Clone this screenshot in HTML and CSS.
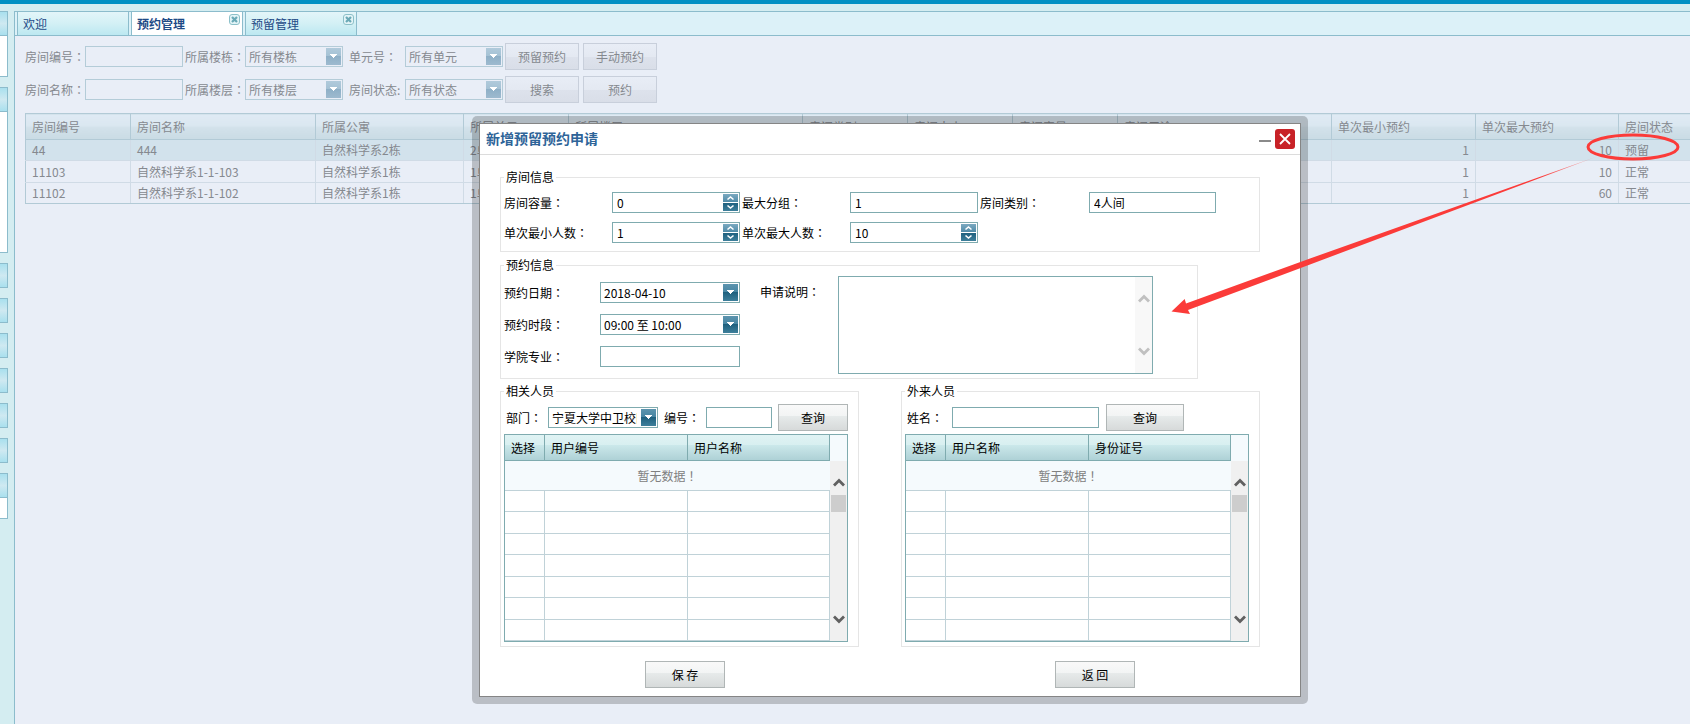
FILE: index.html
```
<!DOCTYPE html>
<html lang="zh-CN">
<head>
<meta charset="utf-8">
<title>预约管理</title>
<link rel="stylesheet" href="styles.css">
</head>
<body>
<svg class="symbols" aria-hidden="true">
  <symbol id="down" viewBox="0 0 15 17"><path d="M4 6h7v1h-1v1H9v1H8v1H7V9H6V8H5V7H4z" fill="#fff"/></symbol>
  <symbol id="spin" viewBox="0 0 15 17"><path d="M4.500 5.500L7.500 3L10.500 5.500M4.500 11.500L7.500 14L10.500 11.500" fill="none" stroke="#fff" stroke-width="1.600"/></symbol>
  <symbol id="tabx" viewBox="0 0 11 11"><rect x=".5" y=".5" width="10" height="10" rx="2.500" fill="#e3f4f7" stroke="#8cc0c9"/><path d="M3 3L8 8M8 3L3 8" stroke="#6aa9b6" stroke-width="2.200"/></symbol>
  <symbol id="up-arrow" viewBox="0 0 12 9"><path d="M1 7.500L6 2.500L11 7.500" fill="none" stroke="currentColor" stroke-width="2.800"/></symbol>
  <symbol id="down-arrow" viewBox="0 0 12 9"><path d="M1 1.500L6 6.500L11 1.500" fill="none" stroke="currentColor" stroke-width="2.800"/></symbol>
</svg>

<div class="topbar"></div>
<div class="app">
  <aside class="side">
    <div class="panel"><div class="panel-head"></div><div class="panel-body small"></div></div>
    <div class="panel"><div class="panel-head"></div><div class="panel-body large"></div></div>
    <div class="panel"><div class="panel-head"></div></div>
    <div class="panel"><div class="panel-head"></div></div>
    <div class="panel"><div class="panel-head"></div></div>
    <div class="panel"><div class="panel-head"></div></div>
    <div class="panel"><div class="panel-head"></div></div>
    <div class="panel"><div class="panel-head"></div></div>
    <div class="panel"><div class="panel-head"></div><div class="panel-body tiny"></div></div>
  </aside>

  <main class="main">
    <nav class="tabs">
      <a class="tab" href="#">欢迎</a>
      <a class="tab active" href="#">预约管理<svg class="tab-x"><use href="#tabx"/></svg></a>
      <a class="tab" href="#">预留管理<svg class="tab-x"><use href="#tabx"/></svg></a>
    </nav>

    <form class="filters">
      <label for="f-no">房间编号<span class="colon" lang="zh-TW">：</span></label>
      <input class="field" id="f-no" type="text">
      <label for="f-building">所属楼栋<span class="colon" lang="zh-TW">：</span></label>
      <div class="combo"><select class="field" id="f-building"><option>所有楼栋</option></select><svg><use href="#down"/></svg></div>
      <label for="f-unit">单元号<span class="colon" lang="zh-TW">：</span></label>
      <div class="combo"><select class="field" id="f-unit"><option>所有单元</option></select><svg><use href="#down"/></svg></div>
      <button class="btn" type="button">预留预约</button>
      <button class="btn" type="button">手动预约</button>

      <label for="f-name">房间名称<span class="colon" lang="zh-TW">：</span></label>
      <input class="field" id="f-name" type="text">
      <label for="f-floor">所属楼层<span class="colon" lang="zh-TW">：</span></label>
      <div class="combo"><select class="field" id="f-floor"><option>所有楼层</option></select><svg><use href="#down"/></svg></div>
      <label for="f-state">房间状态:</label>
      <div class="combo"><select class="field" id="f-state"><option>所有状态</option></select><svg><use href="#down"/></svg></div>
      <button class="btn" type="button">搜索</button>
      <button class="btn" type="button">预约</button>
    </form>

    <div class="rooms-wrap">
      <table class="rooms">
        <colgroup><col class="w105"><col class="w185"><col class="w148"><col class="w105"><col class="w234"><col class="w105"><col class="w105"><col class="w105"><col class="w214"><col class="w144"><col class="w143"><col class="w105"></colgroup>
        <thead><tr><th>房间编号</th><th>房间名称</th><th>所属公寓</th><th>所属单元</th><th>所属楼层</th><th>房间类别</th><th>房间大小</th><th>房间容量</th><th>房间用途</th><th>单次最小预约</th><th>单次最大预约</th><th>房间状态</th></tr></thead>
        <tbody>
          <tr class="selected"><td>44</td><td>444</td><td>自然科学系2栋</td><td>2单元</td><td></td><td></td><td></td><td></td><td></td><td class="num">1</td><td class="num">10</td><td>预留</td></tr>
          <tr><td>11103</td><td>自然科学系1-1-103</td><td>自然科学系1栋</td><td>1单元</td><td></td><td></td><td></td><td></td><td></td><td class="num">1</td><td class="num">10</td><td>正常</td></tr>
          <tr><td>11102</td><td>自然科学系1-1-102</td><td>自然科学系1栋</td><td>1单元</td><td></td><td></td><td></td><td></td><td></td><td class="num">1</td><td class="num">60</td><td>正常</td></tr>
        </tbody>
      </table>
    </div>
  </main>
</div>

<div class="dialog-shadow">
  <section class="dialog" role="dialog" aria-labelledby="dlg-title">
    <header class="dialog-head">
      <h1 id="dlg-title">新增预留预约申请</h1>
      <button class="minimize" type="button" aria-label="最小化"></button>
      <button class="close" type="button" aria-label="关闭"><svg viewBox="0 0 20 20"><path d="M5 5L15 15M15 5L5 15" stroke="#fff" stroke-width="1.800"/></svg></button>
    </header>
    <form class="dialog-body">
      <fieldset class="room-info">
        <legend>房间信息</legend>
        <div class="room-grid">
          <label for="cap">房间容量<span class="colon" lang="zh-TW">：</span></label>
          <div class="spinner"><input class="field" id="cap" type="text" value="0"><svg><use href="#spin"/></svg></div>
          <label for="grp">最大分组<span class="colon" lang="zh-TW">：</span></label>
          <input class="field" id="grp" type="text" value="1">
          <label for="kind">房间类别<span class="colon" lang="zh-TW">：</span></label>
          <input class="field" id="kind" type="text" value="4人间">
          <label for="min">单次最小人数<span class="colon" lang="zh-TW">：</span></label>
          <div class="spinner"><input class="field" id="min" type="text" value="1"><svg><use href="#spin"/></svg></div>
          <label for="max">单次最大人数<span class="colon" lang="zh-TW">：</span></label>
          <div class="spinner"><input class="field" id="max" type="text" value="10"><svg><use href="#spin"/></svg></div>
        </div>
      </fieldset>

      <fieldset class="book-info">
        <legend>预约信息</legend>
        <div class="book-layout">
          <div class="book-grid">
            <label for="date">预约日期<span class="colon" lang="zh-TW">：</span></label>
            <div class="combo"><select class="field" id="date"><option>2018-04-10</option></select><svg><use href="#down"/></svg></div>
            <label for="slot">预约时段<span class="colon" lang="zh-TW">：</span></label>
            <div class="combo"><select class="field" id="slot"><option>09:00 至 10:00</option></select><svg><use href="#down"/></svg></div>
            <label for="major">学院专业<span class="colon" lang="zh-TW">：</span></label>
            <input class="field" id="major" type="text">
          </div>
          <label class="note-label" for="note">申请说明<span class="colon" lang="zh-TW">：</span></label>
          <div class="note">
            <textarea id="note"></textarea>
            <div class="note-scroll"><svg><use href="#up-arrow"/></svg><svg><use href="#down-arrow"/></svg></div>
          </div>
        </div>
      </fieldset>

      <div class="people">
        <fieldset>
          <legend>相关人员</legend>
          <div class="query">
            <label class="dept-label" for="dept">部门<span class="colon" lang="zh-TW">：</span></label>
            <div class="combo dept"><select class="field" id="dept"><option>宁夏大学中卫校区</option></select><svg><use href="#down"/></svg></div>
            <label class="no-label" for="no">编号<span class="colon" lang="zh-TW">：</span></label>
            <input class="field no" id="no" type="text">
            <button class="btn" type="button">查询</button>
          </div>
          <div class="list">
            <table>
              <colgroup><col class="w40"><col class="w143"><col></colgroup>
              <thead><tr><th>选择</th><th>用户编号</th><th>用户名称</th></tr></thead>
              <tbody>
                <tr class="empty"><td colspan="3">暂无数据<span class="colon" lang="zh-TW">！</span></td></tr>
                <tr><td></td><td></td><td></td></tr><tr><td></td><td></td><td></td></tr>
                <tr><td></td><td></td><td></td></tr><tr><td></td><td></td><td></td></tr>
                <tr><td></td><td></td><td></td></tr><tr><td></td><td></td><td></td></tr>
                <tr><td></td><td></td><td></td></tr>
              </tbody>
            </table>
            <div class="scroll"><svg><use href="#up-arrow"/></svg><div class="thumb"></div><svg class="to-end"><use href="#down-arrow"/></svg></div>
          </div>
        </fieldset>

        <fieldset>
          <legend>外来人员</legend>
          <div class="query">
            <label class="name-label" for="name">姓名<span class="colon" lang="zh-TW">：</span></label>
            <input class="field name" id="name" type="text">
            <button class="btn wide" type="button">查询</button>
          </div>
          <div class="list">
            <table>
              <colgroup><col class="w40"><col class="w143"><col></colgroup>
              <thead><tr><th>选择</th><th>用户名称</th><th>身份证号</th></tr></thead>
              <tbody>
                <tr class="empty"><td colspan="3">暂无数据<span class="colon" lang="zh-TW">！</span></td></tr>
                <tr><td></td><td></td><td></td></tr><tr><td></td><td></td><td></td></tr>
                <tr><td></td><td></td><td></td></tr><tr><td></td><td></td><td></td></tr>
                <tr><td></td><td></td><td></td></tr><tr><td></td><td></td><td></td></tr>
                <tr><td></td><td></td><td></td></tr>
              </tbody>
            </table>
            <div class="scroll"><svg><use href="#up-arrow"/></svg><div class="thumb"></div><svg class="to-end"><use href="#down-arrow"/></svg></div>
          </div>
        </fieldset>
      </div>

      <footer class="actions">
        <button class="btn" type="button">保 存</button>
        <button class="btn" type="button">返 回</button>
      </footer>
    </form>
  </section>
</div>

<svg class="markup" width="1690" height="724" viewBox="0 0 1690 724" aria-hidden="true">
  <defs><linearGradient id="tail" gradientUnits="userSpaceOnUse" x1="1540" y1="177" x2="1602" y2="155"><stop offset="0" stop-color="#fb3b39"/><stop offset="1" stop-color="#fb3b39" stop-opacity="0.200"/></linearGradient></defs>
  <ellipse cx="1633" cy="147" rx="45" ry="12" fill="none" stroke="#fb3b39" stroke-width="3"/>
  <path d="M1171.500 311.500L1184.700 299L1186 303.500L1310 258.500L1597 156.500L1310 264.500L1188 310L1190 314z" fill="url(#tail)"/>
</svg>
</body>
</html>
```
FILE: styles.css
```
* { box-sizing: border-box; }

body {
  margin: 0;
  height: 100vh;
  display: flex;
  flex-direction: column;
  overflow: hidden;
  background: #d4edf1;
  color: #000;
  font: 12px/16px "Noto Sans CJK SC", sans-serif;
}

input, select, textarea, button { margin: 0; font: inherit; color: inherit; }
label { white-space: nowrap; }
.colon { font-family: "Noto Sans CJK TC", sans-serif; }
.symbols { display: none; }

.topbar { height: 4px; background: #0090c3; flex: none; }
.app { flex: 1; display: flex; padding-top: 7px; min-height: 0; }

/* side panels */
.side { width: 14px; flex: none; display: flex; flex-direction: column; gap: 10px; }
.panel { width: 8px; border-right: 1px solid #8cbccc; }
.panel-head {
  height: 25px;
  border: solid #8cbccc;
  border-width: 1px 0;
  background: linear-gradient(#a9e0ee, #cfe9f1 50%, #a9e0ee);
}
.panel-body { background: #fff; border-bottom: 1px solid #8cbccc; }
.panel-body.small { height: 41px; }
.panel-body.large { height: 141px; }
.panel-body.tiny { height: 21px; }

/* workspace */
.main {
  flex: 1;
  min-width: 0;
  border: solid #8cbccc;
  border-width: 1px 0 0 1px;
  background: #e9eef7;
  color: #85898f;
}
.tabs {
  display: flex;
  gap: 2px;
  height: 24px;
  padding-left: 2px;
  background: #dcf1f8;
  border-bottom: 1px solid #8cbccc;
}
.tab {
  position: relative;
  width: 112px;
  padding: 4px 5px;
  border: solid #8cbccc;
  border-width: 0 1px;
  background: linear-gradient(#e3f5f9, #d3f0f5 50%, #bce8f1);
  color: #1e4a86;
  text-decoration: none;
}
.tab.active { background: #fff; font-weight: bold; }
.tab-x { position: absolute; top: 2px; right: 2px; width: 11px; height: 11px; }

.field {
  display: block;
  width: 100%;
  height: 21px;
  padding: 0 4px;
  border: 1px solid #7fabaf;
  border-radius: 0;
  background: #fff;
  outline: 0;
}
select.field { appearance: none; padding: 0 20px 0 3px; text-overflow: clip; }
.combo, .spinner { position: relative; }
.combo svg, .spinner svg {
  position: absolute;
  top: 2px;
  right: 2px;
  width: 15px;
  height: 17px;
  background: linear-gradient(#5c94ae, #4685a2 49%, #1f617f 50%, #3e7f9b);
  pointer-events: none;
}
.spinner svg { background: linear-gradient(#7ba9c0, #4f8ba8 8px, #fff 8px, #fff 9px, #1f617f 9px, #3e7f9b); }

.btn {
  height: 27px;
  padding: 0;
  border: 1px solid #b0b6b6;
  border-radius: 0;
  background: linear-gradient(#f9f9f9, #f2f4f4 45%, #e6eaea 46%, #d7dada);
}

.filters {
  display: grid;
  grid-template-columns: 60px 100px 60px 104px 56px 100px 78px 74px;
  row-gap: 6px;
  align-items: center;
  padding: 7px 10px 10px;
}
.filters .field { width: 98px; border-color: #b4ccd8; background: #e9eef7; }
.filters .combo { width: 98px; }
.filters .combo svg { background: linear-gradient(#b0cadb, #a4c1d4 49%, #8fb0c7 50%, #9dbacf); }
.filters .btn { width: 74px; border-color: #c8cfdb; background: linear-gradient(#e8edf6, #e4e9f2 50%, #dde2ec 51%, #d9dee8); }

.rooms-wrap { padding-left: 10px; overflow: hidden; }
.rooms { width: 1698px; table-layout: fixed; border-collapse: collapse; border: 1px solid #b2cad6; }
.w40 { width: 40px; } .w105 { width: 105px; } .w143 { width: 143px; }
.w144 { width: 144px; } .w148 { width: 148px; } .w185 { width: 185px; }
.w214 { width: 214px; } .w234 { width: 234px; }
.rooms th, .rooms td { padding: 0 6px; border-right: 1px solid #d0dbe6; text-align: left; font-weight: normal; }
.rooms th {
  height: 26px;
  border: 1px solid #b2cad6;
  background: linear-gradient(#dfeaf4, #dae7f0 49%, #d3e2eb 50%, #c9dbe4);
}
.rooms td { height: 21px; border-bottom: 1px solid #d0dbe6; }
.rooms tr:nth-child(2) td { height: 22px; }
.rooms tr:last-child td { border-bottom-color: #b2cad6; }
.rooms .selected { background: #d2e2ec; }
.rooms .num { text-align: right; }

/* dialog window */
.dialog-shadow {
  position: absolute;
  top: 116px;
  left: 472px;
  width: 836px;
  padding: 7px;
  border-radius: 5px;
  background: rgba(0, 0, 0, 0.2);
}
.dialog { border: 1px solid #858585; background: #fff; }
.dialog-head {
  display: flex;
  align-items: center;
  height: 31px;
  padding: 0 5px 0 6px;
  border-bottom: 1px solid #dcdcdc;
}
.dialog-head h1 { flex: 1; margin: 0; padding-bottom: 2px; font-size: 14px; line-height: 20px; color: #2e6498; }
.minimize { width: 12px; height: 20px; margin-right: 4px; padding: 4px 0 0; border: 0; background: none; }
.minimize::before { content: ""; display: block; height: 2px; background: #8a8a8a; }
.close { width: 20px; height: 20px; padding: 0; border: 0; border-radius: 3px; background: #c82227; }
.close svg { display: block; width: 20px; height: 20px; }

.dialog-body { padding: 14px 0 8px 20px; }
fieldset { min-width: 0; margin: 0; padding: 0 3px 4px; border: 1px solid #e5e5e5; }
legend { padding: 0 2px; height: 17px; }

.room-info { margin-right: 40px; }
.room-grid {
  display: grid;
  grid-template-columns: 108px 130px 108px 130px 109px 127px;
  row-gap: 9px;
  align-items: center;
  padding: 6px 0 4px;
}
.room-grid .spinner, .room-grid .field { max-width: 128px; }

.book-info { margin: 5px 102px 4px 0; }
.book-layout { display: flex; align-items: flex-start; padding-top: 2px; }
.book-grid {
  display: grid;
  grid-template-columns: 96px 140px;
  row-gap: 11px;
  align-items: center;
  padding-top: 6px;
}
.note-label { width: 98px; padding: 8px 0 0 20px; }
.note { position: relative; flex: none; width: 315px; height: 98px; }
.note textarea { display: block; width: 100%; height: 100%; padding: 3px 20px 3px 3px; border: 1px solid #7fabaf; resize: none; overflow: hidden; outline: 0; }
.note-scroll {
  position: absolute;
  inset: 1px 1px 1px auto;
  width: 17px;
  padding: 17px 0;
  display: flex;
  flex-direction: column;
  align-items: center;
  justify-content: space-between;
  background: #f8f8f8;
  color: #c0c0c0;
}
.note-scroll svg, .scroll svg { width: 12px; height: 9px; flex: none; }

.people { display: grid; grid-template-columns: 359px 359px; column-gap: 42px; }
.query { display: flex; align-items: center; height: 34px; padding-bottom: 3px; padding-top: 4px; }
.dept-label { width: 44px; padding-left: 2px; }
.dept { width: 110px; }
.no-label { width: 48px; padding-left: 6px; }
.no { width: 66px; }
.name-label { width: 47px; padding-left: 2px; }
.name { width: 147px; }
.query .btn { width: 70px; margin-left: 6px; }
.query .btn.wide { width: 78px; margin-left: 7px; }

.list { display: flex; width: 344px; border: 1px solid #7fabaf; background: #f5fafd; }
.list table { width: 325px; flex: none; table-layout: fixed; border-collapse: separate; border-spacing: 0; }
.list th, .list td { padding: 0 6px; border: solid #c0d2d8; border-width: 0 1px 1px 0; text-align: left; font-weight: normal; }
.list th {
  height: 26px;
  border-color: #7fabaf;
  background: linear-gradient(#e0f3f4, #d8eff0 40%, #cbe8ea 41%, #aed1d6);
}
.list td { height: 21px; background: #fff; }
.list tr:nth-child(odd) td { height: 22px; }
.list tr:nth-child(2) td, .list tr:last-child td { height: 21px; }
.list .empty td:first-child { height: 30px; border-right: 0; background: #f5fafd; color: #808080; text-align: center; }
.scroll {
  flex: 1;
  margin-top: 26px;
  padding: 17px 0;
  display: flex;
  flex-direction: column;
  align-items: center;
  background: #f0f0f0;
  color: #606060;
}
.thumb { width: 15px; height: 17px; margin-top: 8px; background: #cdcdcd; }
.to-end { margin-top: auto; }

.actions { display: grid; grid-template-columns: 410px 410px; justify-items: center; margin: 14px 0 0 -20px; }
.actions .btn { width: 80px; }

.markup { position: absolute; top: 0; left: 0; pointer-events: none; }
```
